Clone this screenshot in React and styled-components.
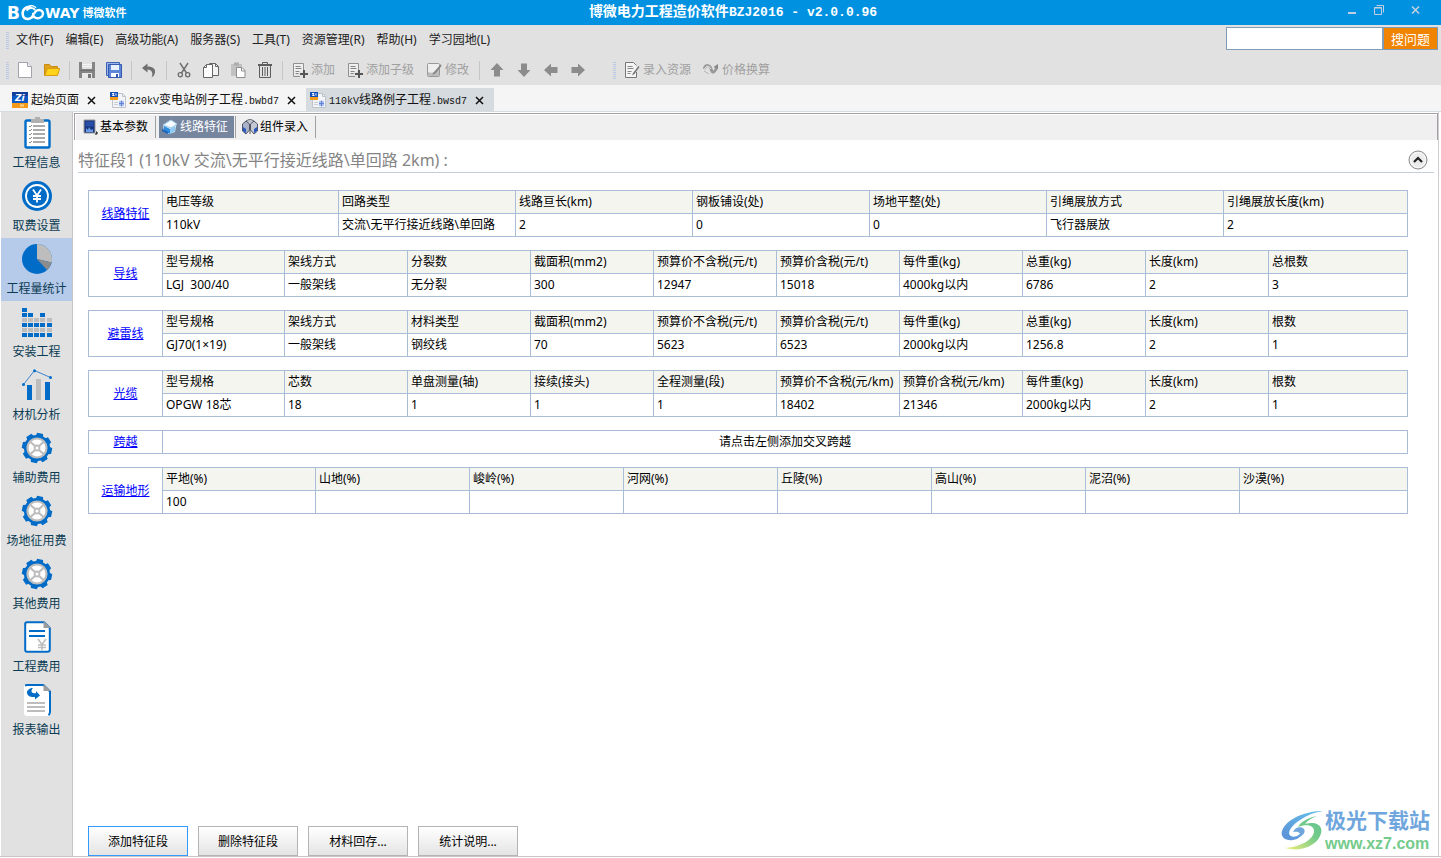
import React from "react";
import styled, { createGlobalStyle, css } from "styled-components";

const GlobalStyle = createGlobalStyle`
  *, *::before, *::after { box-sizing: border-box; }
  body {
    margin: 0;
    background: #fff;
    color: #000;
    font: 12px/18px "Noto Sans", "Noto Sans CJK SC", sans-serif;
  }
  button, input { font: inherit; color: inherit; }
`;

const Window = styled.div`
  display: flex;
  flex-direction: column;
  min-height: 100vh;
  padding-bottom: 1px;
`;

/* ---------- title bar ---------- */

const TitleBar = styled.header`
  display: grid;
  grid-template-columns: 1fr auto 1fr;
  align-items: center;
  height: 25px;
  padding: 0 20px 0 7px;
  background: #0092e1;
  color: #fff;
`;

const Brand = styled.div`
  display: flex;
  align-items: center;
  font-weight: 700;
  font-size: 11px;
`;

const BrandLetters = styled.span`
  font: 700 ${(p) => (p.$initial ? 17 : 14)}px/18px "DejaVu Sans", sans-serif;
`;

const BrandName = styled.span`
  margin-left: 3px;
`;

const Title = styled.h1`
  margin: 0;
  padding-left: 38px;
  font: 700 13px/24px "Liberation Mono", "Noto Sans CJK SC", monospace;
  white-space: pre;
`;

const TitleHan = styled.span`
  font-size: 14px;
`;

const WindowButtons = styled.div`
  display: flex;
  justify-content: flex-end;
  gap: 17px;
  padding-bottom: 6px;
`;

const WindowButton = styled.button`
  display: flex;
  margin-left: ${(p) => (p.$last ? 10 : 0)}px;
  padding: 0;
  border: 0;
  background: none;
`;

/* ---------- menu and toolbar ---------- */

const Bar = styled.div`
  display: flex;
  align-items: center;
  height: 30px;
  background: #e1e1e1;
`;

const Grip = styled.i`
  width: 3px;
  height: 17px;
  margin-left: ${(p) => p.$before || 0}px;
  background: repeating-linear-gradient(#b9c9e4 0 1px, #e1e1e1 1px 2px);
`;

const Menu = styled.nav`
  display: flex;
  gap: 12px;
  margin-left: 7px;
`;

const MenuLink = styled.a`
  color: #222;
  text-decoration: none;
  white-space: nowrap;
`;

const Search = styled.form`
  display: flex;
  height: 23px;
  margin: 0 3px 3px auto;
`;

const SearchInput = styled.input`
  width: 157px;
  padding: 0 4px;
  border: 1px solid #7f9db9;
  background: #fff;
`;

const SearchButton = styled.button`
  width: 55px;
  padding: 0;
  border: 1px solid #7f9db9;
  background: #f08300;
  color: #fff;
  font-size: 13px;
  line-height: 20px;
`;

const Tools = styled.div`
  display: flex;
  align-items: center;
  margin-left: 2px;
`;

const ToolButton = styled.button`
  display: flex;
  align-items: center;
  justify-content: center;
  gap: 3px;
  min-width: 27px;
  height: 24px;
  padding: 0 ${(p) => (p.$labelled ? 6 : 0)}px;
  border: 0;
  background: none;
  color: #a0a0a0;
  white-space: nowrap;
`;

const ToolSeparator = styled.i`
  width: 1px;
  height: 19px;
  margin: 0 3px 0 4px;
  background: #c5c5c9;
`;

/* ---------- document tabs ---------- */

const DocTabs = styled.nav`
  display: flex;
  align-items: flex-end;
  height: 27px;
  padding-left: 8px;
  border-bottom: 1px solid #d6dbdf;
  background: #f5f5f5;
`;

const DocTab = styled.div`
  display: flex;
  align-items: center;
  height: 23px;
  padding: 0 9px 0 4px;
  background: ${(p) => (p.$active ? "#d6dbdf" : "transparent")};
`;

const DocTabLink = styled.a`
  display: flex;
  align-items: center;
  gap: 3px;
  color: #111;
  text-decoration: none;
  white-space: nowrap;
`;

const DocTabName = styled.span`
  padding-top: 2px;
`;

const FileLatin = styled.span`
  font: 10px/18px "Liberation Mono", monospace;
`;

const CloseTab = styled.button`
  display: flex;
  margin: 3px 0 0 8px;
  padding: 0;
  border: 0;
  background: none;
`;

/* ---------- body ---------- */

const Body = styled.div`
  display: flex;
  flex: 1;
  padding-left: 1px;
  border-bottom: 1px solid #c8c5c8;
`;

const Sidebar = styled.nav`
  flex: none;
  width: 72px;
  border-right: 1px solid #c8c5c8;
  background: #e1e1e1;
`;

const SideLink = styled.a`
  display: flex;
  flex-direction: column;
  align-items: center;
  gap: 5px;
  height: 63px;
  padding-top: 5px;
  background: ${(p) => (p.$active ? "#b6caea" : "transparent")};
  color: #0b3c54;
  text-decoration: none;
  white-space: nowrap;
`;

const Main = styled.main`
  display: flex;
  flex: 1;
  flex-direction: column;
  min-width: 0;
  margin-right: 2px;
  padding-left: 1px;
  border-right: 1px solid #d0cdd0;
`;

const SubTabs = styled.nav`
  display: flex;
  height: 27px;
  margin-top: 1px;
  padding: 2px 0 2px 3px;
  border: 1px solid #a5a0a5;
  border-bottom: 0;
  background: #f0f0f0;
  box-shadow: inset 1px 1px #fff;
`;

const SubTab = styled.a`
  display: flex;
  align-items: center;
  gap: 2px;
  height: 22px;
  margin-left: 1px;
  padding: 0 6px 0 3px;
  color: #000;
  text-decoration: none;
  white-space: nowrap;
  ${(p) =>
    p.$active &&
    css`
      background: #77869f;
      color: #fff;
    `}
`;

const SubSeparator = styled.i`
  width: 1px;
  height: 22px;
  margin: 0 2px 0 1px;
  background: #a0a0a0;
`;

const SectionHeader = styled.div`
  display: flex;
  align-items: center;
  justify-content: space-between;
  height: 33px;
  margin: 0 4px;
  padding: 7px 6px 0 0;
  border-bottom: 1px solid #c3cfdf;
`;

const SectionTitle = styled.h2`
  margin: 0;
  color: #848484;
  font-size: 16px;
  font-weight: 400;
  line-height: 24px;
`;

const CollapseButton = styled.button`
  display: flex;
  padding: 0;
  border: 0;
  background: none;
`;

const Tables = styled.div`
  display: flex;
  flex: 1;
  flex-direction: column;
  gap: 13px;
  padding: 17px 30px 24px 14px;
`;

const DataTable = styled.table`
  width: 100%;
  border-collapse: collapse;
  table-layout: fixed;
`;

const cell = css`
  height: 23px;
  padding: 0 3px;
  border: 1px solid #a9bdd8;
  font-weight: 400;
  text-align: left;
  white-space: nowrap;
`;

const HeadCell = styled.th`
  ${cell}
  background: #f5f5f0;
`;

const LabelCell = styled.th`
  ${cell}
  text-align: center;
`;

const Cell = styled.td`
  ${cell}
  text-align: ${(p) => (p.$center ? "center" : "left")};
`;

const TableLink = styled.a`
  color: #0000ff;
`;

const Actions = styled.footer`
  display: flex;
  gap: 10px;
  padding-left: 14px;
`;

const ActionButton = styled.button`
  width: 100px;
  height: 30px;
  padding: 2px 0 0;
  border: 1px solid ${(p) => (p.$primary ? "#3399ff" : "#b4b4b4")};
  background: linear-gradient(#fff, #e4e4e4);
`;

const Watermark = styled.a`
  position: absolute;
  right: 11px;
  bottom: 4px;
  display: flex;
  align-items: center;
  gap: 1px;
  color: #6fa6dd;
  text-decoration: none;
`;

const WatermarkText = styled.span`
  display: flex;
  flex-direction: column;
  gap: 3px;
`;

const WatermarkName = styled.strong`
  font: 700 21px/24px "Noto Sans CJK SC", sans-serif;
`;

const WatermarkSite = styled.span`
  color: #74cb8b;
  font: 700 16px/20px "Liberation Sans", sans-serif;
`;

/* ---------- icons ---------- */

const Icon = ({ size = 16, children, ...rest }) => (
  <svg width={size} height={size} viewBox={`0 0 ${size} ${size}`} fill="none" aria-hidden="true" {...rest}>
    {children}
  </svg>
);

const BrandMark = () => (
  <svg width="25" height="16" viewBox="0 0 25 16" fill="none" aria-hidden="true">
    <path d="M11 2.200C6.500 1 2.600 4 2.600 8.500S6 14.500 9 13.800s4.500-3.500 4.500-6" stroke="#fff" strokeWidth="2.600" />
    <path d="M6.500 5.500C9 2.500 13.500 2 15 5" stroke="#fff" strokeWidth="2" />
    <path d="M13 10c.5 3 4.500 4 7.500 2.500s3.500-5.500.5-7-6 .5-6.500 3" stroke="#fff" strokeWidth="2.400" />
    <path d="M9 1.200C11.500 0 15 .8 16 3" stroke="#fff" strokeWidth="1.300" />
  </svg>
);

const NewIcon = () => (
  <Icon>
    <path d="M1.500.5h9l4 4v11h-13z" fill="#fff" stroke="#a3a3ad" />
    <path d="M10.500.5v4h4" fill="#ededf2" stroke="#a3a3ad" />
  </Icon>
);

const OpenIcon = () => (
  <Icon>
    <path d="M.5 13.500v-11h5l1.500 2h6.500v3" fill="#e0a21c" stroke="#c98a10" />
    <path d="M.7 13.500 3.500 6.500h12.200l-2.200 7z" fill="#ffd21c" stroke="#d89d10" />
  </Icon>
);

const SaveIcon = () => (
  <Icon>
    <path d="M0 0h16v16H0z" fill="#858585" />
    <path d="M3 0h10v7H3z" fill="#e1e1e1" />
    <path d="M3 2.500h10M3 4.500h10" stroke="#f3f3f3" />
    <path d="M3 11h10v5H3z" fill="#e9e9e9" />
    <path d="M9 12h3v4H9z" fill="#777" />
    <path d="M1 8.500h14" stroke="#6f6f6f" />
  </Icon>
);

const SaveAllIcon = () => (
  <Icon>
    <path d="M.5.5h13v13H.5z" fill="#9db6ea" stroke="#3c62b8" />
    <path d="M2.500 2.500h13v13h-13z" fill="#5d85d8" stroke="#3459ad" />
    <path d="M5 3h8v5H5z" fill="#e9f0fd" />
    <path d="M5 11h8v4H5z" fill="#fff" />
    <path d="M10 12h2v3h-2z" fill="#3459ad" />
  </Icon>
);

const UndoIcon = () => (
  <Icon>
    <path d="M1 6 6.500 1.500v3C12 4.500 14.500 7 14 10.500c-.3 2-1.500 4-3.500 5C12.500 11 11 8 6.500 7.500v3z" fill="#6f6f6f" />
  </Icon>
);

const CutIcon = () => (
  <Icon stroke="#6c6c6c">
    <path d="M4 1l6.500 10M12 1 5.500 11" strokeWidth="1.400" />
    <circle cx="4.300" cy="12.800" r="2.100" strokeWidth="1.300" />
    <circle cx="11.700" cy="12.800" r="2.100" strokeWidth="1.300" />
  </Icon>
);

const CopyIcon = () => (
  <Icon stroke="#666">
    <path d="M6.500 1.500h6l3 3v9h-9z" fill="#f4f4f4" />
    <path d="M12.500 1.500v3h3" />
    <path d="M.5 5.500 3.500 2.500h6v13h-9z" fill="#fff" />
    <path d="M.5 5.500h3v-3" />
  </Icon>
);

const PasteIcon = () => (
  <Icon>
    <path d="M1 2h11v12H1z" fill="#c2c2c2" />
    <path d="M4 .5h5v3H4z" fill="#adadad" />
    <path d="M6.500 5.500h5.500l3 3v7H6.500z" fill="#fff" stroke="#8d8d8d" />
    <path d="M11.500 5.500v3.500H15" stroke="#8d8d8d" />
  </Icon>
);

const TrashIcon = () => (
  <Icon stroke="#5e5e5e">
    <path d="M1 3h14" strokeWidth="2" />
    <path d="M5.500 2V.5h5V2" />
    <path d="M2.500 4v11.500h11V4M5.500 5v9M8 5v9M10.500 5v9" />
  </Icon>
);

const AddIcon = () => (
  <Icon>
    <path d="M1.500 14V1.500h10V8" fill="#efefef" stroke="#909090" />
    <path d="M1.500 8v6.500H8" stroke="#909090" />
    <path d="M3.500 4.500h5M3.500 6.500h6M3.500 9.500h4M3.500 11.500h3" stroke="#858585" />
    <path d="M12 8v8M8 12h8" stroke="#555" strokeWidth="2" />
  </Icon>
);

const EditIcon = () => (
  <Icon>
    <rect x="1.500" y="1.500" width="12" height="13" rx="1" fill="#eee" stroke="#999" />
    <path d="M2 10c4 2 7 0 11-4v8H2z" fill="#bdbdbd" />
    <path d="m15 2-7 8-2 3 3.500-1.500L15.500 4z" fill="#858585" />
  </Icon>
);

const EntryIcon = () => (
  <Icon>
    <path d="M12.500 10v5.500h-11V.5h8l3 3" fill="#f4f4f4" stroke="#777" />
    <path d="M3.500 4.500h5M3.500 6.500h6M3.500 9.500h4M3.500 11.500h3" stroke="#888" />
    <path d="m14.500 4-5.500 7-1 2.500L10.500 12l5-7z" fill="#777" />
  </Icon>
);

const PriceIcon = () => (
  <Icon>
    <path d="M1 7c2-5 6-4 7 0s3 5 6-2" stroke="#999" strokeWidth="3" />
    <path d="M1.500 7c2-4 5-3.500 6 0" stroke="#eee" />
    <path d="m10.500 5 4.500-3v5z" fill="#888" />
    <path d="m1 9 5 3" stroke="#b4b4b4" />
  </Icon>
);

const ArrowIcon = ({ turn = 0 }) => (
  <Icon>
    <path
      d="M8 1 14.500 8H11v6.500H5V8H1.500z"
      fill="#8c8c8c"
      transform={`rotate(${turn} 8 8)`}
    />
  </Icon>
);

const CloseIcon = () => (
  <Icon size={10}>
    <path d="m1 1 7 7M8 1 1 8" stroke="#111" strokeWidth="1.500" />
  </Icon>
);

const HomeIcon = () => (
  <Icon>
    <path d="M0 0h16v11H0z" fill="#0b57c4" />
    <path d="M0 0h16v4H0z" fill="#123f9c" />
    <path d="M0 11h16v5H0z" fill="#f39a1b" />
    <path d="M8 12.500h4v2H8z" fill="#fbd28e" />
    <text x="3" y="9" fill="#fff" fontFamily="DejaVu Sans" fontSize="9" fontWeight="700" fontStyle="italic">Zi</text>
  </Icon>
);

const FileIcon = () => (
  <Icon>
    <path d="M2.500 1.500h10l3 3v11h-13z" fill="#f2f4f8" stroke="#bfc4cc" />
    <path d="M12.500 1.500v3h3" stroke="#bfc4cc" />
    <path d="M0 0h8v5H0z" fill="#1550b8" />
    <path d="M0 5h8v3H0z" fill="#f39a1b" />
    <path d="M2 1.500h2L2.500 3.500h2M6 1.500v2" stroke="#fff" />
    <path d="M4 10.500h4M4 12.500h4" stroke="#c8ccd4" />
    <path d="M9 9h5v5H9z" fill="#a9bff0" />
    <path d="M11.500 8.500v6M9 11.500h5" stroke="#6182d8" />
  </Icon>
);

const ParamIcon = () => (
  <Icon>
    <path d="M2 1h11v13H2z" fill="#16357d" stroke="#9a9a9a" />
    <path d="M3.500 2.500h8v5h-8z" fill="#284fa8" />
    <path d="M4 13V9l2 2 1-3 2 3 2-1v3z" fill="#6b9be8" />
    <path d="M14 13h1v2h-2" stroke="#000" />
  </Icon>
);

const LineIcon = () => (
  <Icon>
    <path d="m1 6 7-5 7 4-1 2-1 6-6 2-5-3z" fill="#d8ecfb" />
    <path d="m1 6 8-5 6 4-6 4z" fill="#f6fbff" stroke="#9cc5e6" />
    <path d="m2 7 6 3v5l-6-3z" fill="#2d8de0" />
    <path d="m8 10 5-3v5l-5 3z" fill="#8fc8f2" />
    <path d="m0 11 6 3" stroke="#1e63b8" strokeWidth="2" />
  </Icon>
);

const PartsIcon = () => (
  <Icon>
    <path d="m8 0 4 2v3L8 7 4 5V2z" fill="#c3c6cc" stroke="#666b75" />
    <path d="m4 2 3.500 3v6L4 15 .5 12V5z" fill="#a9b2c6" stroke="#4f566a" />
    <path d="m12 2 3.500 3v7L12 15l-3.500-4V5z" fill="#c4c8d2" stroke="#4f566a" />
    <path d="m1 8 3 2v4l-3-2zM12 10l3-2v4l-3 2z" fill="#2858c0" />
    <path d="M8 6v9" stroke="#555" />
  </Icon>
);

const BLUE = "#006cc8";
const GREY = "#bdbdbd";

const ClipboardIcon = () => (
  <Icon size={32}>
    <rect x="4.500" y="3.500" width="24" height="27" rx="1.500" fill="#fff" stroke={BLUE} strokeWidth="2.400" />
    <path d="M10 2h4V0h5v2h4v4H10z" fill="#b0b0b0" />
    {[9, 13, 17, 21, 25].map((y) => (
      <g key={y}>
        <path d={`m8 ${y} 1 1 2-2`} stroke="#888" />
        <path d={`M12 ${y}h12`} stroke="#aaa" strokeWidth="2" />
      </g>
    ))}
  </Icon>
);

const CoinIcon = () => (
  <Icon size={32}>
    <circle cx="16" cy="16" r="15" fill={BLUE} />
    <circle cx="16" cy="16" r="11" stroke="#fff" strokeWidth="1.800" />
    <path d="m12 9.500 4 6 4-6M16 15v7.500M12 16h8M12 19h8" stroke="#fff" strokeWidth="1.800" />
  </Icon>
);

const PieIcon = () => (
  <Icon size={32}>
    <circle cx="16" cy="16" r="15" fill={BLUE} />
    <path d="M16 16V1a15 15 0 0 1 14.600 18.500z" fill={GREY} />
    <path d="m16 16 14.600 3.500A15 15 0 0 1 26 27z" fill="#8c8c8c" />
  </Icon>
);

const BlocksIcon = () => (
  <Icon size={32}>
    {[0, 1, 2, 1, 2].map((top, col) =>
      [0, 1, 2, 3, 4, 5]
        .filter((row) => row >= top)
        .map((row) => (
          <rect
            key={`${col}-${row}`}
            x={1 + col * 6 + (col > 3 ? 1 : 0)}
            y={2 + row * 5}
            width="5"
            height="4"
            fill={row === 2 || row === 4 ? GREY : BLUE}
          />
        ))
    )}
  </Icon>
);

const ChartIcon = () => (
  <Icon size={32}>
    <path d="M6 16h5v15H6zM24 13h5v18h-5z" fill={BLUE} />
    <path d="M15 10h5v21h-5z" fill={GREY} />
    <path d="m2.500 15.500 11-14 16 7" stroke="#3a85d0" />
    <circle cx="2.500" cy="15.500" r="1.500" fill={BLUE} />
    <circle cx="13.500" cy="1.700" r="1.500" fill={BLUE} />
    <circle cx="29.500" cy="8.500" r="1.500" fill={BLUE} />
  </Icon>
);

const GearIcon = () => (
  <Icon size={32}>
    {[12, 57, 102, 147, 192, 237, 282, 327].map((a) => (
      <path key={a} d="M12 5 13 1h6l1 4z" fill={BLUE} transform={`rotate(${a} 16 16)`} />
    ))}
    <circle cx="16" cy="16" r="13" fill={BLUE} />
    <circle cx="16" cy="16" r="9.500" fill="#fff" stroke={GREY} strokeWidth="2.200" />
    <path d="m9.500 10 4.500 4M22.500 10 18 14M9.500 22l4.500-4M22.500 22 18 18" stroke={GREY} strokeWidth="2.200" />
    <circle cx="16" cy="16" r="2.500" fill="#fff" stroke={GREY} strokeWidth="1.800" />
  </Icon>
);

const BillIcon = () => (
  <Icon size={32}>
    <path d="M6 1.200h17L28.800 7v21.500q0 2.300-2.300 2.300H6q-1.800 0-1.800-2V3q0-1.800 1.800-1.800z" fill="#fff" stroke={BLUE} strokeWidth="2" />
    <path d="m22.500 0 7.500 7h-7.500z" fill="#9d9d9d" />
    <path d="M8 10h16M8 15h16" stroke={BLUE} strokeWidth="2" />
    <path d="m17 18 4 5.500 4-5.500M21 23v6M17 24h8M17 26.500h8" stroke={GREY} strokeWidth="1.600" />
  </Icon>
);

const ReportIcon = () => (
  <Icon size={32}>
    <path d="M6 0h17l7 7v22q0 3-3 3H6q-3 0-3-3V3q0-3 3-3z" fill="#fff" />
    <path d="M4 1.500 6 1h16.500L29 7.500V28q0 2-1.500 3.200" stroke={BLUE} strokeWidth="2" />
    <path d="m22.500 0 7.500 7h-7.500z" fill="#9d9d9d" />
    <path d="M12 4c-2 2-2 4.500 0 5 1 .3 2 .3 3 .3V7l4 4.500-5 4V13c-4 .5-8-1-8-4.500C6 6 9 4 12 4z" fill={BLUE} />
    <path d="M6 19h18M6 23h18M6 27h18" stroke={GREY} strokeWidth="2" />
  </Icon>
);

const WatermarkLogo = () => (
  <svg width="43" height="42" viewBox="0 0 43 42" aria-hidden="true">
    <defs>
      <linearGradient id="swirlTop" x1="0" y1="1" x2="1" y2="0">
        <stop offset="0" stopColor="#5d8fd8" />
        <stop offset="1" stopColor="#63c3ea" />
      </linearGradient>
      <linearGradient id="swirlBottom" x1="0" y1="1" x2="1" y2="0">
        <stop offset="0" stopColor="#f2ee7a" />
        <stop offset=".6" stopColor="#74cb8b" />
        <stop offset="1" stopColor="#5fc28a" />
      </linearGradient>
    </defs>
    <path d="M42 1C24 1 5 9 1 21c-2 7 5 10 11 9 7-1 10-6 9-9-2 4-7 7-11 5-5-3 1-11 9-16C26 5 34 2 42 1z" fill="url(#swirlTop)" />
    <path d="M36 6C27 8 19 12 17 17c8-3 16-2 16 4 0 8-13 16-29 17 15 4 28-1 34-10 5-8 2-14-6-15-3 0-6 0-8 1 3-4 7-6 12-8z" fill="url(#swirlBottom)" />
    <path d="M12 22c2-5 8-6 11-3 2 3-1 7-5 8 2-3 1-6-6-5z" fill="#6fa6dd" />
  </svg>
);

/* ---------- data ---------- */

const MENUS = ["文件(F)", "编辑(E)", "高级功能(A)", "服务器(S)", "工具(T)", "资源管理(R)", "帮助(H)", "学习园地(L)"];

const TOOLS = [
  { name: "新建", icon: <NewIcon /> },
  { name: "打开", icon: <OpenIcon /> },
  null,
  { name: "保存", icon: <SaveIcon /> },
  { name: "全部保存", icon: <SaveAllIcon /> },
  null,
  { name: "撤销", icon: <UndoIcon /> },
  null,
  { name: "剪切", icon: <CutIcon /> },
  { name: "复制", icon: <CopyIcon /> },
  { name: "粘贴", icon: <PasteIcon /> },
  { name: "删除", icon: <TrashIcon /> },
  null,
  { name: "添加", icon: <AddIcon />, labelled: true },
  { name: "添加子级", icon: <AddIcon />, labelled: true },
  { name: "修改", icon: <EditIcon />, labelled: true },
  null,
  { name: "上移", icon: <ArrowIcon /> },
  { name: "下移", icon: <ArrowIcon turn={180} /> },
  { name: "左移", icon: <ArrowIcon turn={270} /> },
  { name: "右移", icon: <ArrowIcon turn={90} /> },
];

const RESOURCE_TOOLS = [
  { name: "录入资源", icon: <EntryIcon />, labelled: true },
  { name: "价格换算", icon: <PriceIcon />, labelled: true },
];

const DOCUMENTS = [
  { parts: ["", "起始页面", ""], icon: <HomeIcon /> },
  { parts: ["220kV", "变电站例子工程", ".bwbd7"], icon: <FileIcon /> },
  { parts: ["110kV", "线路例子工程", ".bwsd7"], icon: <FileIcon />, active: true },
];

const SIDE_ITEMS = [
  ["工程信息", <ClipboardIcon />],
  ["取费设置", <CoinIcon />],
  ["工程量统计", <PieIcon />],
  ["安装工程", <BlocksIcon />],
  ["材机分析", <ChartIcon />],
  ["辅助费用", <GearIcon />],
  ["场地征用费", <GearIcon />],
  ["其他费用", <GearIcon />],
  ["工程费用", <BillIcon />],
  ["报表输出", <ReportIcon />],
];

const SUB_TABS = [
  ["基本参数", <ParamIcon />],
  ["线路特征", <LineIcon />],
  ["组件录入", <PartsIcon />],
];

const FEATURE_TABLES = [
  {
    label: "线路特征",
    column: 177,
    head: ["电压等级", "回路类型", "线路亘长(km)", "钢板铺设(处)", "场地平整(处)", "引绳展放方式", "引绳展放长度(km)"],
    values: ["110kV", "交流\\无平行接近线路\\单回路", "2", "0", "0", "飞行器展放", "2"],
  },
  {
    label: "导线",
    column: 123,
    head: ["型号规格", "架线方式", "分裂数", "截面积(mm2)", "预算价不含税(元/t)", "预算价含税(元/t)", "每件重(kg)", "总重(kg)", "长度(km)", "总根数"],
    values: ["LGJ\u00a0 300/40", "一般架线", "无分裂", "300", "12947", "15018", "4000kg以内", "6786", "2", "3"],
  },
  {
    label: "避雷线",
    column: 123,
    head: ["型号规格", "架线方式", "材料类型", "截面积(mm2)", "预算价不含税(元/t)", "预算价含税(元/t)", "每件重(kg)", "总重(kg)", "长度(km)", "根数"],
    values: ["GJ70(1×19)", "一般架线", "钢绞线", "70", "5623", "6523", "2000kg以内", "1256.8", "2", "1"],
  },
  {
    label: "光缆",
    column: 123,
    head: ["型号规格", "芯数", "单盘测量(轴)", "接续(接头)", "全程测量(段)", "预算价不含税(元/km)", "预算价含税(元/km)", "每件重(kg)", "长度(km)", "根数"],
    values: ["OPGW 18芯", "18", "1", "1", "1", "18402", "21346", "2000kg以内", "2", "1"],
  },
  { label: "跨越", message: "请点击左侧添加交叉跨越" },
  {
    label: "运输地形",
    column: 154,
    head: ["平地(%)", "山地(%)", "峻岭(%)", "河网(%)", "丘陵(%)", "高山(%)", "泥沼(%)", "沙漠(%)"],
    values: ["100", "", "", "", "", "", "", ""],
  },
];

const ACTIONS = ["添加特征段", "删除特征段", "材料回存...", "统计说明..."];

/* ---------- composed parts ---------- */

const ToolGroup = ({ items }) =>
  items.map((tool, i) =>
    tool ? (
      <ToolButton key={tool.name} type="button" aria-label={tool.name} $labelled={tool.labelled}>
        {tool.icon}
        {tool.labelled && tool.name}
      </ToolButton>
    ) : (
      <ToolSeparator key={i} />
    )
  );

const FeatureTable = ({ label, column, head, values, message }) => (
  <DataTable>
    <colgroup>
      <col width="74" />
      {message ? (
        <col />
      ) : (
        head.map((h, i) => {
          const last = i === head.length - 1;
          return <col key={h} width={last ? undefined : i === 0 ? column - 1 : column} />;
        })
      )}
    </colgroup>
    <tbody>
      <tr>
        <LabelCell scope="rowgroup" rowSpan={message ? 1 : 2}>
          <TableLink href="#">{label}</TableLink>
        </LabelCell>
        {message ? <Cell $center>{message}</Cell> : head.map((h) => <HeadCell key={h} scope="col">{h}</HeadCell>)}
      </tr>
      {!message && (
        <tr>
          {values.map((v, i) => (
            <Cell key={i}>{v}</Cell>
          ))}
        </tr>
      )}
    </tbody>
  </DataTable>
);

export default function App() {
  return (
    <Window>
      <GlobalStyle />
      <TitleBar>
        <Brand>
          <BrandLetters $initial>B</BrandLetters>
          <BrandMark />
          <BrandLetters>WAY</BrandLetters>
          <BrandName>博微软件</BrandName>
        </Brand>
        <Title>
          <TitleHan>博微电力工程造价软件</TitleHan>BZJ2016 - v2.0.0.96
        </Title>
        <WindowButtons>
          <WindowButton type="button" aria-label="最小化">
            <Icon size={10}><path d="M1 8h8" stroke="#c3cfe0" strokeWidth="2" /></Icon>
          </WindowButton>
          <WindowButton type="button" aria-label="还原">
            <Icon size={10}>
              <path d="M2.500.5h7v7" stroke="#c3cfe0" />
              <path d="M.5 2.500h7v7h-7zM0 3h8" stroke="#c3cfe0" />
            </Icon>
          </WindowButton>
          <WindowButton type="button" aria-label="关闭" $last>
            <Icon size={10}><path d="m1 1.500 7 7M8 1.500l-7 7" stroke="#c3cfe0" strokeWidth="1.600" /></Icon>
          </WindowButton>
        </WindowButtons>
      </TitleBar>

      <Bar>
        <Grip $before={6} />
        <Menu>
          {MENUS.map((m) => (
            <MenuLink key={m} href="#">{m}</MenuLink>
          ))}
        </Menu>
        <Search>
          <SearchInput type="search" aria-label="搜问题" />
          <SearchButton type="button">搜问题</SearchButton>
        </Search>
      </Bar>

      <Bar>
        <Grip $before={6} />
        <Tools>
          <ToolGroup items={TOOLS} />
        </Tools>
        <Grip $before={22} />
        <Tools>
          <ToolGroup items={RESOURCE_TOOLS} />
        </Tools>
      </Bar>

      <DocTabs>
        {DOCUMENTS.map(({ parts: [prefix, name, suffix], icon, active }) => (
          <DocTab key={name} $active={active}>
            <DocTabLink href="#">
              {icon}
              <DocTabName>
                <FileLatin>{prefix}</FileLatin>
                {name}
                <FileLatin>{suffix}</FileLatin>
              </DocTabName>
            </DocTabLink>
            <CloseTab type="button" aria-label={`关闭 ${name}`}>
              <CloseIcon />
            </CloseTab>
          </DocTab>
        ))}
      </DocTabs>

      <Body>
        <Sidebar>
          {SIDE_ITEMS.map(([name, icon]) => (
            <SideLink key={name} href="#" $active={name === "工程量统计"}>
              {icon}
              {name}
            </SideLink>
          ))}
        </Sidebar>

        <Main>
          <SubTabs>
            {SUB_TABS.map(([name, icon]) => (
              <React.Fragment key={name}>
                <SubTab href="#" $active={name === "线路特征"}>
                  {icon}
                  {name}
                </SubTab>
                <SubSeparator />
              </React.Fragment>
            ))}
          </SubTabs>

          <SectionHeader>
            <SectionTitle>特征段1 (110kV 交流\无平行接近线路\单回路 2km) :</SectionTitle>
            <CollapseButton type="button" aria-label="收起">
              <Icon size={20}>
                <circle cx="10" cy="10" r="9" fill="#ececec" stroke="#8a8a8a" />
                <circle cx="10" cy="10" r="7.500" stroke="#fafafa" />
                <path d="m6 12 4-4 4 4" stroke="#222" strokeWidth="2.200" />
              </Icon>
            </CollapseButton>
          </SectionHeader>

          <Tables>
            {FEATURE_TABLES.map((t) => (
              <FeatureTable key={t.label} {...t} />
            ))}
          </Tables>

          <Actions>
            {ACTIONS.map((a, i) => (
              <ActionButton key={a} type="button" $primary={i === 0}>{a}</ActionButton>
            ))}
          </Actions>
        </Main>
      </Body>

      <Watermark href="#">
        <WatermarkLogo />
        <WatermarkText>
          <WatermarkName>极光下载站</WatermarkName>
          <WatermarkSite>www.xz7.com</WatermarkSite>
        </WatermarkText>
      </Watermark>
    </Window>
  );
}
